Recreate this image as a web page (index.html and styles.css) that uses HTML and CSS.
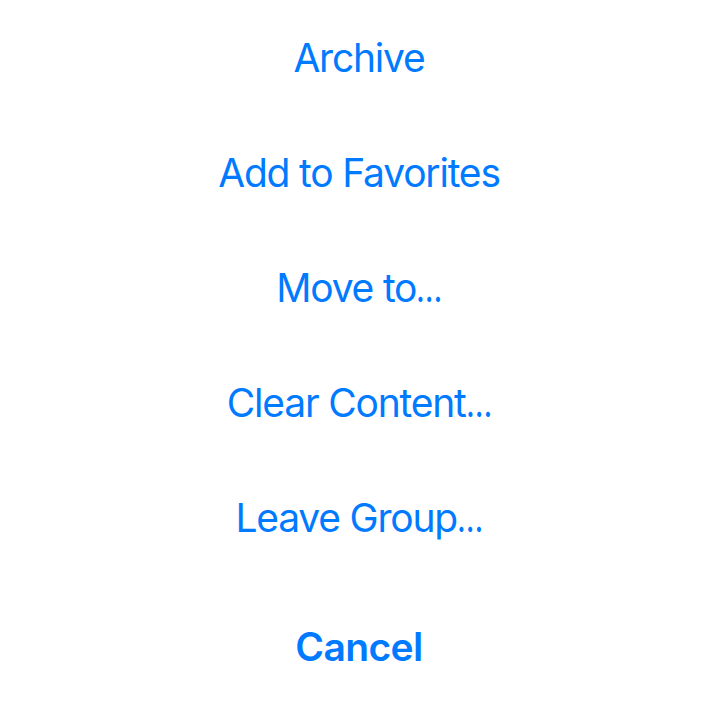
FILE: index.html
```html
<!DOCTYPE html>
<html>
<head>
<meta charset="utf-8">
<link rel="stylesheet" href="styles.css">
</head>
<body>
<div class="sheet">
  <div class="group">
    <div class="action">Archive</div>
    <div class="action">Add to Favorites</div>
    <div class="action">Move to<span class="ell">…</span></div>
    <div class="action">Clear Content<span class="ell">…</span></div>
    <div class="action">Leave Group<span class="ell">…</span></div>
  </div>
  <div class="group cancel-group">
    <div class="action cancel">Cancel</div>
  </div>
</div>
</body>
</html>
```
FILE: styles.css
```css
html, body {
  margin: 0;
  padding: 0;
  background: #ffffff;
}
.sheet {
  width: 718px;
  height: 704px;
  display: flex;
  flex-direction: column;
  gap: 14px;
  font-family: Inter, "Noto Sans", sans-serif;
  color: #007aff;
}
.group {
  display: flex;
  flex-direction: column;
}
.action {
  height: 115px;
  display: flex;
  align-items: center;
  justify-content: center;
  font-size: 39px;
  font-weight: 400;
  letter-spacing: -1.2px;
}
.ell {
  display: inline-block;
  transform: scaleX(0.78);
  transform-origin: left center;
  margin-right: -7px;
}
.cancel {
  font-weight: 600;
  letter-spacing: -0.6px;
}
```
